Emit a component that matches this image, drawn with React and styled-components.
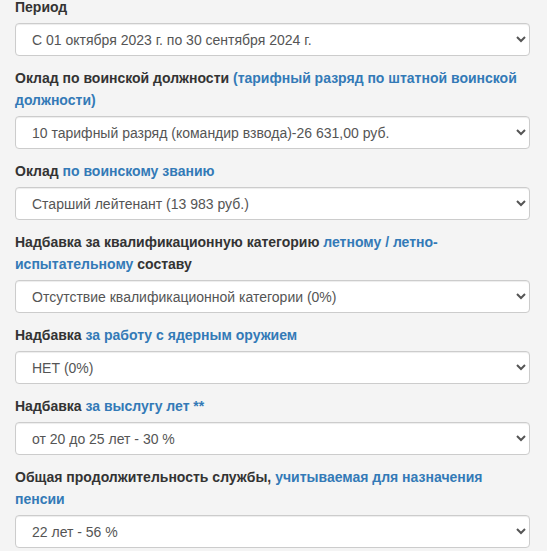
import React from 'react';
import styled, { createGlobalStyle } from 'styled-components';

const GlobalStyles = createGlobalStyle`
  html, body {
    margin: 0;
    padding: 0;
    background: #f4f4f4;
  }
  body {
    font-family: 'Liberation Sans', Arial, sans-serif;
    font-size: 14px;
    color: #333;
  }
`;

const Form = styled.form`
  width: 515px;
  margin: -4px 0 0 15px;
`;

const Group = styled.div`
  margin-bottom: 11px;
`;

const Label = styled.label`
  display: block;
  font-weight: bold;
  line-height: 22px;
  margin-bottom: 5px;
`;

const Link = styled.a`
  color: #337ab7;
  text-decoration: none;
`;

const Select = styled.select`
  display: block;
  width: 100%;
  height: 33px;
  padding: 6px 12px;
  font-family: 'Liberation Sans', Arial, sans-serif;
  font-size: 14px;
  color: #555;
  background-color: #fff;
  border: 1px solid #ccc;
  border-radius: 4px;
  box-shadow: inset 0 1px 1px rgba(0, 0, 0, 0.075);
  box-sizing: border-box;
`;

const fields = [
  {
    label: <>Период</>,
    value: 'С 01 октября 2023 г. по 30 сентября 2024 г.',
  },
  {
    label: (
      <>
        Оклад по воинской должности{' '}
        <Link href="#">(тарифный разряд по штатной воинской должности)</Link>
      </>
    ),
    value: '10 тарифный разряд (командир взвода)-26 631,00 руб.',
  },
  {
    label: (
      <>
        Оклад <Link href="#">по воинскому званию</Link>
      </>
    ),
    value: 'Старший лейтенант (13 983 руб.)',
  },
  {
    label: (
      <>
        Надбавка за квалификационную категорию <Link href="#">летному</Link>{' '}
        <Link as="span">/</Link> <Link href="#">летно-испытательному</Link> составу
      </>
    ),
    value: 'Отсутствие квалификационной категории (0%)',
  },
  {
    label: (
      <>
        Надбавка <Link href="#">за работу с ядерным оружием</Link>
      </>
    ),
    value: 'НЕТ (0%)',
  },
  {
    label: (
      <>
        Надбавка <Link href="#">за выслугу лет **</Link>
      </>
    ),
    value: 'от 20 до 25 лет - 30 %',
  },
  {
    label: (
      <>
        Общая продолжительность службы,{' '}
        <Link href="#">учитываемая для назначения пенсии</Link>
      </>
    ),
    value: '22 лет - 56 %',
  },
];

const App = () => {
  return (
    <>
      <GlobalStyles />
      <Form>
        {fields.map((f, i) => (
          <Group key={i}>
            <Label>{f.label}</Label>
            <Select defaultValue={f.value}>
              <option>{f.value}</option>
            </Select>
          </Group>
        ))}
      </Form>
    </>
  );
};

export default App;
